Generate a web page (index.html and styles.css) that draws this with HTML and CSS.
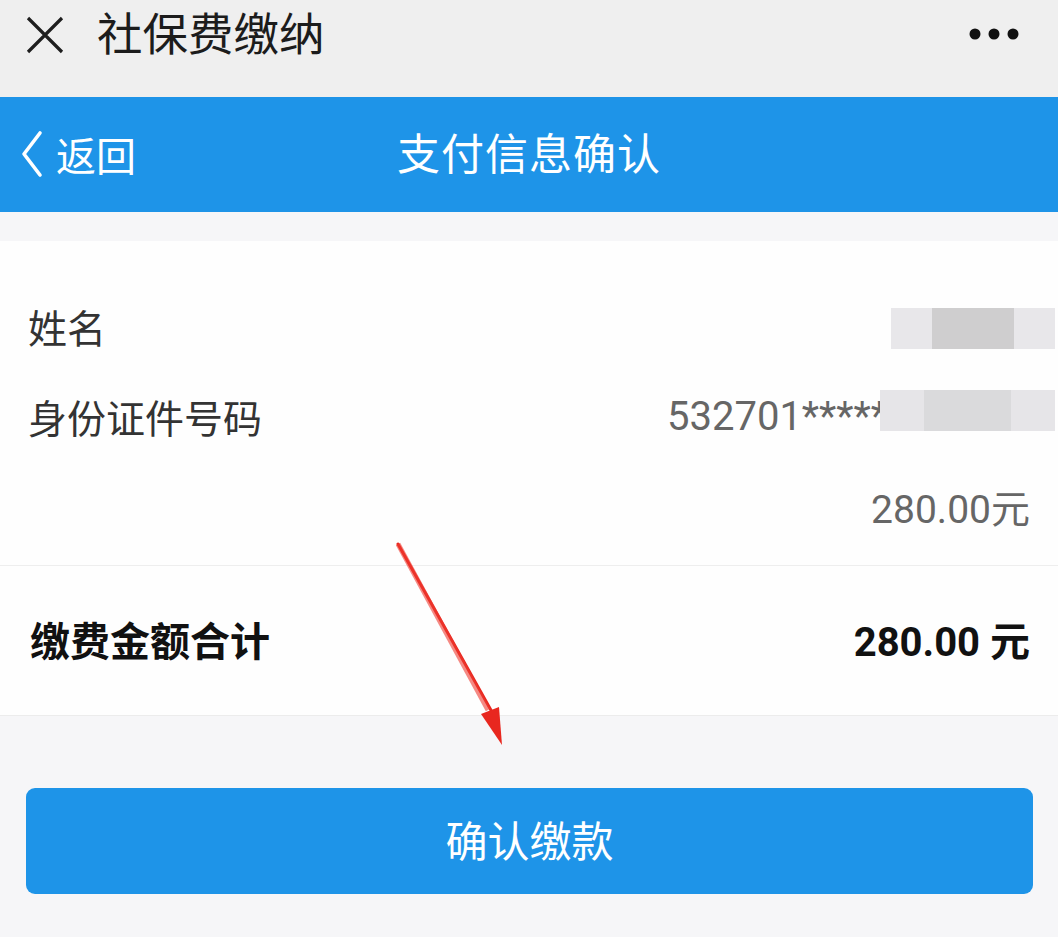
FILE: index.html
```html
<!DOCTYPE html>
<html lang="zh-CN">
<head>
  <meta charset="UTF-8">
  <meta name="viewport" content="width=device-width, initial-scale=1.0">
  <title>社保费缴纳</title>
  <link rel="stylesheet" href="styles.css">
</head>
<body>
  <!-- WeChat title bar -->
  <div class="topbar">
    <svg class="close-icon" width="40" height="40" viewBox="0 0 40 40">
      <path d="M3 3 L37 37 M37 3 L3 37" stroke="#1e1e1e" stroke-width="3.2" fill="none"/>
    </svg>
    <div class="topbar-title">社保费缴纳</div>
    <svg class="more-icon" width="52" height="14" viewBox="0 0 52 14">
      <circle cx="7" cy="7" r="5.5" fill="#111"/>
      <circle cx="26" cy="7" r="5.5" fill="#111"/>
      <circle cx="45" cy="7" r="5.5" fill="#111"/>
    </svg>
  </div>

  <!-- Page header -->
  <div class="header">
    <div class="back">
      <svg width="24" height="48" viewBox="0 0 24 48">
        <path d="M20 3 L4 24 L20 45" stroke="#fff" stroke-width="3.6" fill="none" stroke-linecap="round" stroke-linejoin="round"/>
      </svg>
      <span>返回</span>
    </div>
    <div class="header-title">支付信息确认</div>
  </div>

  <div class="content">
    <!-- Info card -->
    <div class="card">
      <div class="info">
        <div class="row">
          <span class="label">姓名</span>
          <span class="value"><span class="mask mask-name"><i></i><i class="dark"></i><i class="dark"></i><i></i></span></span>
        </div>
        <div class="row">
          <span class="label">身份证件号码</span>
          <span class="value value-id">532701*****<span class="mask mask-id"><i></i><i class="dark"></i><i class="dark"></i><i></i></span></span>
        </div>
        <div class="row">
          <span class="label"></span>
          <span class="value">280.00元</span>
        </div>
      </div>
      <div class="total">
        <span>缴费金额合计</span>
        <span class="total-num">280.00 元</span>
      </div>
    </div>

    <!-- Confirm button -->
    <div class="actions">
      <button class="confirm-btn">确认缴款</button>
    </div>

    <!-- Annotation arrow -->
    <svg class="arrow" width="130" height="210" viewBox="0 0 130 210">
      <path d="M2 2 L96 170" stroke="#e8271f" stroke-width="3" fill="none" stroke-linecap="round"/>
      <path d="M106 203 L85 172 L103 165 Z" fill="#e8271f"/>
      <path d="M2 2 L92 168" stroke="#ee3a30" stroke-width="5" fill="none" opacity="0.6"/>
    </svg>
  </div>
</body>
</html>
```

FILE: styles.css
```css
body {
  margin: 0;
  background-color: #f6f6f8;
  font-family: 'Roboto', 'Noto Sans CJK SC', sans-serif;
  color: #333;
}

/* Title Bar */
.topbar {
  height: 97px;
  background-color: #efefef;
  display: flex;
  align-items: center;
  padding: 0 38px 0 25px;
  box-sizing: border-box;
}

.close-icon {
  margin-top: -28px;
}

.topbar-title {
  font-size: 45.5px;
  color: #1c1c1c;
  margin-left: 32px;
  margin-top: -35px;
  flex: 1;
}

.more-icon {
  margin-top: -30px;
}

/* Header */
.header {
  height: 115px;
  background-color: #1e94e8;
  color: white;
  display: flex;
  align-items: center;
  justify-content: center;
  position: relative;
}

.back {
  position: absolute;
  left: 20px;
  top: 28px;
  display: flex;
  align-items: center;
  font-size: 40px;
}

.back svg {
  margin-right: 12px;
}

.header-title {
  font-size: 43px;
  letter-spacing: 1px;
  margin-top: -8px;
}

/* Content */
.content {
  position: relative;
  padding-top: 29px;
}

.card {
  background-color: #fefefe;
  border-bottom: 1px solid #ececec;
}

.info {
  padding: 40px 28px 14px 28px;
  border-bottom: 1px solid #eeeeee;
}

.row {
  height: 90px;
  display: flex;
  align-items: center;
  justify-content: space-between;
  font-size: 39px;
}

.label {
  color: #333;
}

.value {
  color: #666;
  display: flex;
  align-items: center;
}

.value-id {
  font-size: 40px;
}

/* Redacted blocks */
.mask {
  display: flex;
  height: 41px;
}

.mask i {
  display: block;
  width: 41px;
  height: 100%;
  background-color: #e8e7ea;
}

.mask i.dark {
  background-color: #cfcecf;
}

.mask-name {
  margin-right: -25px;
  margin-top: 4px;
}

.mask-id {
  margin-left: -8px;
  margin-right: -25px;
  margin-top: -12px;
  width: 175px;
}

.mask-id i {
  width: 44px;
  background-color: #e6e5e8;
}

.mask-id i.dark {
  background-color: #dadadc;
}

.total {
  height: 149px;
  display: flex;
  align-items: center;
  justify-content: space-between;
  padding: 0 28px 0 30px;
  font-size: 40px;
  font-weight: bold;
  color: #111;
}

.total span {
  margin-top: -4px;
}

/* Button */
.actions {
  padding: 72px 25px 40px 26px;
}

.confirm-btn {
  width: 100%;
  height: 106px;
  border: none;
  border-radius: 9px;
  background-color: #1e94e8;
  color: white;
  font-family: 'Noto Sans CJK SC', sans-serif;
  font-size: 42px;
  padding-bottom: 6px;
}

/* Arrow overlay */
.arrow {
  position: absolute;
  left: 396px;
  top: 330px;
}
```
